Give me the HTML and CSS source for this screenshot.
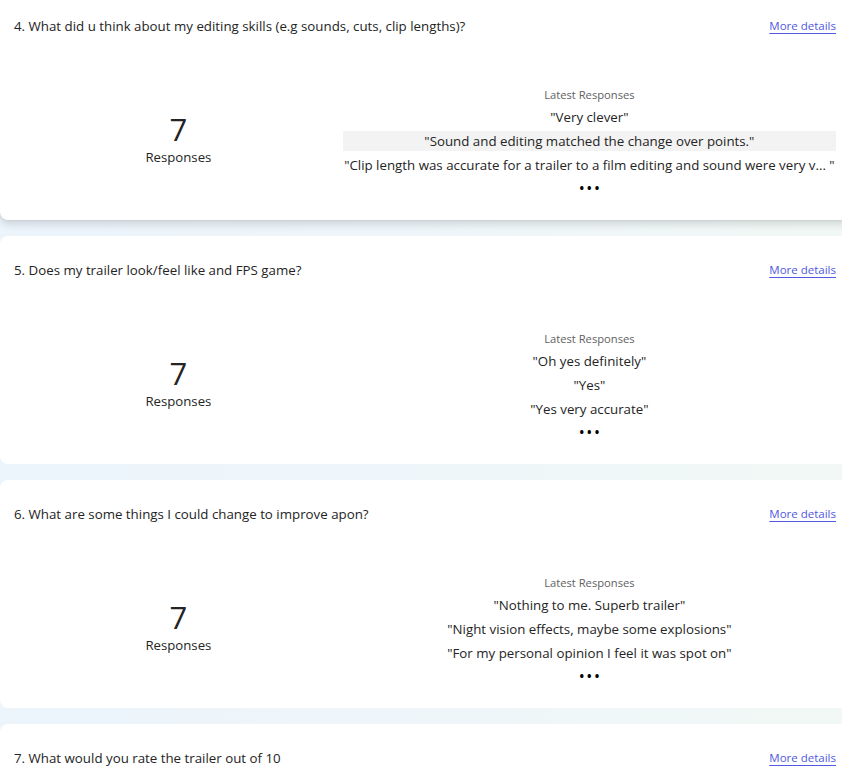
FILE: index.html
```html
<!DOCTYPE html>
<html lang="en">
<head>
    <meta charset="UTF-8">
    <meta name="viewport" content="width=device-width, initial-scale=1.0">
    <title>Form summary</title>
    <link rel="stylesheet" href="styles.css">
</head>
<body>
    <div class="questions">
        <div class="card raised">
            <div class="card-head">
                <span class="question">4. What did u think about my editing skills (e.g sounds, cuts, clip lengths)?</span>
                <a class="details" href="#">More details</a>
            </div>
            <div class="card-body">
                <div class="count">
                    <div class="count-num">7</div>
                    <div class="count-label">Responses</div>
                </div>
                <div class="latest">
                    <div class="latest-title">Latest Responses</div>
                    <div class="answer">"Very clever"</div>
                    <div class="answer hover">"Sound and editing matched the change over points."</div>
                    <div class="answer">"Clip length was accurate for a trailer to a film editing and sound were very v... "</div>
                    <div class="more">&bull;&bull;&bull;</div>
                </div>
            </div>
        </div>

        <div class="card">
            <div class="card-head">
                <span class="question">5. Does my trailer look/feel like and FPS game?</span>
                <a class="details" href="#">More details</a>
            </div>
            <div class="card-body">
                <div class="count">
                    <div class="count-num">7</div>
                    <div class="count-label">Responses</div>
                </div>
                <div class="latest">
                    <div class="latest-title">Latest Responses</div>
                    <div class="answer">"Oh yes definitely"</div>
                    <div class="answer">"Yes"</div>
                    <div class="answer">"Yes very accurate"</div>
                    <div class="more">&bull;&bull;&bull;</div>
                </div>
            </div>
        </div>

        <div class="card">
            <div class="card-head">
                <span class="question">6. What are some things I could change to improve apon?</span>
                <a class="details" href="#">More details</a>
            </div>
            <div class="card-body">
                <div class="count">
                    <div class="count-num">7</div>
                    <div class="count-label">Responses</div>
                </div>
                <div class="latest">
                    <div class="latest-title">Latest Responses</div>
                    <div class="answer">"Nothing to me. Superb trailer"</div>
                    <div class="answer">"Night vision effects, maybe some explosions"</div>
                    <div class="answer">"For my personal opinion I feel it was spot on"</div>
                    <div class="more">&bull;&bull;&bull;</div>
                </div>
            </div>
        </div>

        <div class="card">
            <div class="card-head">
                <span class="question">7. What would you rate the trailer out of 10</span>
                <a class="details" href="#">More details</a>
            </div>
        </div>
    </div>
</body>
</html>
```

FILE: styles.css
```css
body {
    margin: 0;
    font-family: "Open Sans", "Noto Sans", sans-serif;
    color: #242424;
    background: linear-gradient(to right, #ecf4fc, #eef6fa 50%, #f1f8f5);
    overflow: hidden;
}
.questions {
    margin-top: -8px;
    margin-right: -8px;
    display: flex;
    flex-direction: column;
    gap: 16px;
}
.card {
    background: white;
    border-radius: 8px;
    height: 228px;
    padding: 0 14px;
}
.card.raised {
    box-shadow: 0 4px 8px rgba(0,0,0,0.14), 0 0 2px rgba(0,0,0,0.12);
}
.card-head {
    display: flex;
    justify-content: space-between;
    align-items: center;
    padding-top: 26px;
    height: 16px;
}
.question {
    font-size: 13.3px;
    line-height: 16px;
}
.details {
    font-size: 11.5px;
    line-height: 16px;
    color: #5059e0;
    text-decoration: underline;
    text-underline-offset: 3px;
}
.card-body {
    display: flex;
    padding-top: 53px;
}
.count {
    width: 40%;
    text-align: center;
    padding-top: 24px;
}
.count-num {
    font-size: 31px;
    line-height: 36px;
    color: #242424;
}
.count-label {
    font-size: 13.2px;
    line-height: 20px;
}
.latest {
    width: 60%;
    text-align: center;
}
.latest-title {
    font-size: 11.2px;
    line-height: 16px;
    color: #616161;
    margin-bottom: 2px;
}
.answer {
    font-size: 13.3px;
    line-height: 20px;
    margin-top: 4px;
    white-space: nowrap;
}
.answer.hover {
    background: #f3f3f3;
}
.more {
    font-size: 12px;
    font-weight: bold;
    line-height: 16px;
    margin-top: 6px;
    letter-spacing: 3px;
    padding-left: 3px;
    color: #000;
}
```
